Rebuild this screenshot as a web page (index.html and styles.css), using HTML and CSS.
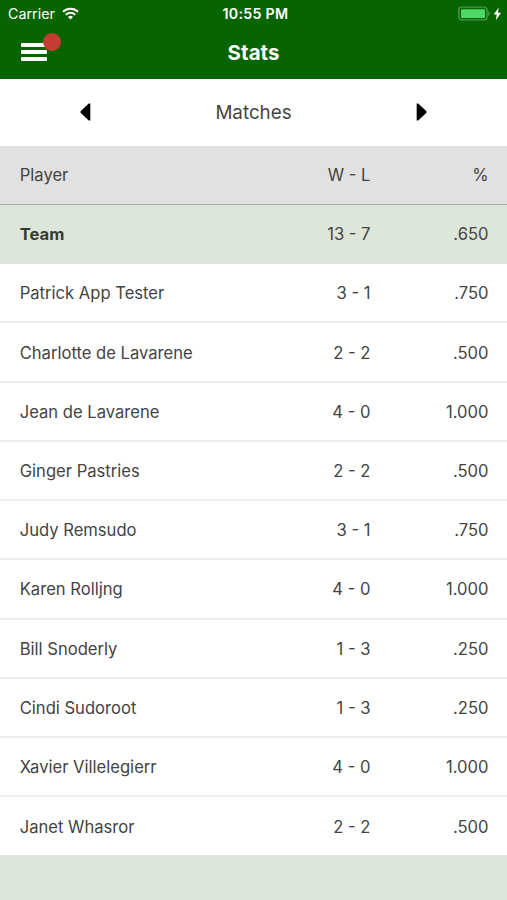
FILE: index.html
```html
<!DOCTYPE html>
<html lang="en">
<head>
<meta charset="utf-8">
<title>Stats</title>
<link rel="stylesheet" href="styles.css">
</head>
<body>
<header class="top">
  <div class="status">
    <div class="status-left">
      <span class="carrier">Carrier</span>
      <svg class="wifi" viewBox="0 0 17 13" width="17" height="13" fill="none" stroke="#fff">
        <path d="M1 4.8a10.6 10.6 0 0 1 15 0" stroke-width="2.1"/>
        <path d="M3.8 7.7a6.7 6.7 0 0 1 9.4 0" stroke-width="2"/>
        <path d="M8.5 12.5 6 10a3.6 3.6 0 0 1 5 0Z" fill="#fff" stroke="none"/>
      </svg>
    </div>
    <span class="clock">10:55 PM</span>
    <div class="status-right">
      <svg viewBox="0 0 45 16" width="45" height="16">
        <rect x=".8" y="1.1" width="28.2" height="12.8" rx="3" fill="none" stroke="#4f944b" stroke-width="1.4"/>
        <rect x="3" y="3.2" width="24" height="8.7" rx="1" fill="#4cd964"/>
        <path d="M30.3 5.5q2 2 0 4Z" fill="#4f944b" stroke="#4f944b"/>
        <path d="m40.8 1.5-5.2 7h3.2l-1 5.7 5.3-7.4h-3.2Z" fill="#fff"/>
      </svg>
    </div>
  </div>
  <div class="nav">
    <button class="menu" aria-label="Menu">
      <span class="bar"></span><span class="bar"></span><span class="bar"></span>
      <span class="badge"></span>
    </button>
    <h1 class="title">Stats</h1>
  </div>
</header>
<div class="picker">
  <svg viewBox="0 0 11 18" width="11" height="18"><path d="M10.3.5v17H8.8L.8 9.9Q0 9 .8 8.1L8.8.5Z"/></svg>
  <span class="category">Matches</span>
  <svg viewBox="0 0 11 18" width="11" height="18"><path d="M.7.5v17h1.5l8-7.6q.8-.9 0-1.8L2.2.5Z"/></svg>
</div>
<main class="table">
  <div class="row head"><span>Player</span><span class="num">W - L</span><span class="num">%</span></div>
  <div class="row team"><span class="name">Team</span><span class="num">13 - 7</span><span class="num">.650</span></div>
  <div class="row"><span>Patrick App Tester</span><span class="num">3 - 1</span><span class="num">.750</span></div>
  <div class="row"><span>Charlotte de Lavarene</span><span class="num">2 - 2</span><span class="num">.500</span></div>
  <div class="row"><span>Jean de Lavarene</span><span class="num">4 - 0</span><span class="num">1.000</span></div>
  <div class="row"><span>Ginger Pastries</span><span class="num">2 - 2</span><span class="num">.500</span></div>
  <div class="row"><span>Judy Remsudo</span><span class="num">3 - 1</span><span class="num">.750</span></div>
  <div class="row"><span>Karen Rolljng</span><span class="num">4 - 0</span><span class="num">1.000</span></div>
  <div class="row"><span>Bill Snoderly</span><span class="num">1 - 3</span><span class="num">.250</span></div>
  <div class="row"><span>Cindi Sudoroot</span><span class="num">1 - 3</span><span class="num">.250</span></div>
  <div class="row"><span>Xavier Villelegierr</span><span class="num">4 - 0</span><span class="num">1.000</span></div>
  <div class="row last"><span>Janet Whasror</span><span class="num">2 - 2</span><span class="num">.500</span></div>
</main>
</body>
</html>
```
FILE: styles.css
```css
* { box-sizing: border-box; }
body {
  margin: 0;
  height: 900px;
  overflow: hidden;
  background: #dce6d9;
  color: #444;
  font-family: Inter, "Liberation Sans", sans-serif;
  font-size: 16.6px;
}
.top {
  height: 79px;
  background: #066500;
  color: #fff;
}
.status {
  display: grid;
  grid-template-columns: 1fr auto 1fr;
  align-items: center;
  height: 27px;
  padding: 0 4px 0 8px;
}
.status-left { display: flex; align-items: center; gap: 7px; }
.status-right { display: flex; justify-content: flex-end; }
.carrier { font-size: 14.3px; }
.clock { font-size: 14.2px; font-weight: 600; letter-spacing: .3px; }
.nav {
  display: grid;
  grid-template-columns: 27px 1fr 27px;
  align-items: center;
  height: 50px;
  padding: 0 21px;
}
.menu {
  position: relative;
  display: flex;
  flex-direction: column;
  gap: 3.3px;
  width: 26px;
  padding: 0;
  border: 0;
  background: none;
}
.bar { height: 4px; border-radius: 1px; background: #fff; }
.badge {
  position: absolute;
  top: -9.5px;
  left: 21.7px;
  width: 18px;
  height: 18px;
  border-radius: 50%;
  background: #c43d32;
}
.title {
  margin: 0;
  padding-top: 1px;
  font-size: 20.5px;
  font-weight: 700;
  text-align: center;
}
.picker {
  display: flex;
  align-items: center;
  justify-content: space-between;
  height: 66.8px;
  padding: 0 80px;
  background: #fff;
}
.category { font-size: 18.8px; }
.row {
  display: grid;
  grid-template-columns: 1fr 100px 118px;
  align-items: center;
  height: 59.23px;
  padding: 1px 18.5px 0 19.7px;
  border-bottom: 2px solid #eee;
  background: #fff;
}
.num { text-align: right; }
.head {
  padding-top: 0;
  border-bottom: 1px solid #a8a9a8;
  background: #e1e1e1;
}
.team { background: #dce6d9; border-bottom-color: #dfe4de; }
.team .name { color: #333b33; font-weight: 700; }
.last { border-bottom: 1px solid #dce6d9; }
```
